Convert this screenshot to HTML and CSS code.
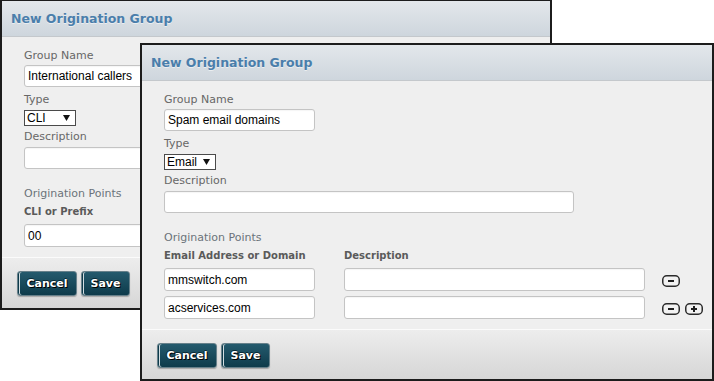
FILE: index.html
```html
<!DOCTYPE html>
<html lang="en">
<head>
<meta charset="utf-8">
<title>New Origination Group</title>
<link rel="stylesheet" href="styles.css">
</head>
<body>
<div class="desk">

  <section class="dialog dialog-back">
    <header class="dlg-head"><h1 class="dlg-title">New Origination Group</h1></header>
    <div class="dlg-body">
      <div class="lbl">Group Name</div>
      <input class="txt txt-name" type="text" value="International callers">
      <div class="lbl lbl-gap">Type</div>
      <div class="select"><span>CLI</span><svg class="arrow" width="7" height="6" viewBox="0 0 7 6"><path d="M0 0H7L3.5 6Z" fill="#111"/></svg></div>
      <div class="lbl lbl-gap2">Description</div>
      <input class="txt txt-desc" type="text" value="">
      <div class="section-title">Origination Points</div>
      <div class="points">
        <div class="prow phead">
          <span class="col1">CLI or Prefix</span>
          <span class="col2">Description</span>
        </div>
        <div class="prow">
          <input class="txt txt-row col1" type="text" value="00">
          <input class="txt txt-row col2" type="text" value="">
          <span class="icons">
            <svg class="ico" width="18" height="12" viewBox="0 0 18 12"><rect x="0.75" y="0.75" width="16.5" height="10.5" rx="4" fill="#f2f2f2" stroke="#2b2b2b" stroke-width="1.5"/><rect x="6" y="5" width="6" height="2" fill="#1e1e1e"/></svg>
          </span>
        </div>
      </div>
    </div>
    <footer class="dlg-foot">
      <button class="btn btn-cancel" type="button">Cancel</button>
      <button class="btn btn-save" type="button">Save</button>
    </footer>
  </section>

  <section class="dialog dialog-front">
    <header class="dlg-head"><h1 class="dlg-title">New Origination Group</h1></header>
    <div class="dlg-body">
      <div class="lbl">Group Name</div>
      <input class="txt txt-name" type="text" value="Spam email domains">
      <div class="lbl lbl-gap">Type</div>
      <div class="select"><span>Email</span><svg class="arrow" width="7" height="6" viewBox="0 0 7 6"><path d="M0 0H7L3.5 6Z" fill="#111"/></svg></div>
      <div class="lbl lbl-gap2">Description</div>
      <input class="txt txt-desc" type="text" value="">
      <div class="section-title">Origination Points</div>
      <div class="points">
        <div class="prow phead">
          <span class="col1">Email Address or Domain</span>
          <span class="col2">Description</span>
        </div>
        <div class="prow">
          <input class="txt txt-row col1" type="text" value="mmswitch.com">
          <input class="txt txt-row col2" type="text" value="">
          <span class="icons">
            <svg class="ico" width="18" height="12" viewBox="0 0 18 12"><rect x="0.75" y="0.75" width="16.5" height="10.5" rx="4" fill="#f2f2f2" stroke="#2b2b2b" stroke-width="1.5"/><rect x="6" y="5" width="6" height="2" fill="#1e1e1e"/></svg>
          </span>
        </div>
        <div class="prow">
          <input class="txt txt-row col1" type="text" value="acservices.com">
          <input class="txt txt-row col2" type="text" value="">
          <span class="icons">
            <svg class="ico" width="18" height="12" viewBox="0 0 18 12"><rect x="0.75" y="0.75" width="16.5" height="10.5" rx="4" fill="#f2f2f2" stroke="#2b2b2b" stroke-width="1.5"/><rect x="6" y="5" width="6" height="2" fill="#1e1e1e"/></svg>
            <svg class="ico" width="18" height="12" viewBox="0 0 18 12"><rect x="0.75" y="0.75" width="16.5" height="10.5" rx="4" fill="#f2f2f2" stroke="#2b2b2b" stroke-width="1.5"/><rect x="6" y="5" width="6" height="2" fill="#1e1e1e"/><rect x="8" y="3" width="2" height="6" fill="#1e1e1e"/></svg>
          </span>
        </div>
      </div>
    </div>
    <footer class="dlg-foot">
      <button class="btn btn-cancel" type="button">Cancel</button>
      <button class="btn btn-save" type="button">Save</button>
    </footer>
  </section>

</div>
</body>
</html>
```
FILE: styles.css
```css
* { box-sizing: border-box; }

html, body {
  margin: 0;
  padding: 0;
  background: #fff;
}

.desk {
  position: relative;
  width: 714px;
  height: 381px;
  overflow: hidden;
}

.dialog {
  position: absolute;
  display: flex;
  flex-direction: column;
  border: 2px solid #1c1c1c;
  background: #efefef;
  font-family: "DejaVu Sans", Verdana, sans-serif;
}

.dialog-back {
  left: 0;
  top: -1px;
  width: 552px;
  height: 311px;
}

.dialog-front {
  left: 140px;
  top: 43px;
  width: 574px;
  height: 338px;
}

.dlg-head {
  height: 36px;
  flex: none;
  display: flex;
  align-items: center;
  padding-left: 9px;
  background: linear-gradient(#e3e7eb, #ced6dd);
  border-bottom: 1px solid #c4c8cc;
}

.dlg-title {
  margin: 0;
  font-size: 12.5px;
  font-weight: bold;
  color: #4a7eab;
  text-shadow: 0 1px 0 rgba(255, 255, 255, 0.55);
}

.dlg-body {
  padding: 12px 22px 10px 22px;
  flex: none;
}

.lbl {
  font-size: 11px;
  line-height: 14px;
  color: #676767;
  margin-bottom: 2px;
}

.lbl-gap { margin-top: 6px; margin-bottom: 3px; }
.lbl-gap2 { margin-top: 4px; margin-bottom: 3px; }

.txt {
  display: block;
  height: 22px;
  margin: 0;
  padding: 0 3px;
  border: 1px solid #c4c4c4;
  border-radius: 3px;
  background: #fff;
  box-shadow: inset 0 1px 1px rgba(0, 0, 0, 0.04);
  font: 12px "Liberation Sans", Arial, sans-serif;
  color: #000;
  outline: none;
}

.txt-row { height: 23px; }
.txt-name { width: 151px; }
.txt-desc { width: 410px; }

.select {
  display: flex;
  align-items: center;
  justify-content: space-between;
  width: 52px;
  height: 16px;
  padding: 0 5px 0 2px;
  border: 1px solid #4a4a4a;
  background: #fff;
  font: 12px "Liberation Sans", Arial, sans-serif;
  color: #000;
}

.arrow { display: block; }

.section-title {
  margin-top: 18px;
  font-size: 11px;
  line-height: 14px;
  color: #6b737a;
}

.points {
  display: flex;
  flex-direction: column;
  gap: 5px;
  margin-top: 5px;
}

.prow {
  display: flex;
  align-items: center;
}

.phead {
  font-size: 10px;
  line-height: 12px;
  font-weight: bold;
  color: #5a5a5a;
  margin-bottom: 1px;
}

.col1 { width: 151px; flex: none; margin-right: 29px; }
.col2 { width: 301px; flex: none; margin-right: 17px; }

.icons {
  display: flex;
  gap: 5px;
  padding-top: 2px;
}

.ico { display: block; }

.dlg-foot {
  flex: 1;
  display: flex;
  align-items: flex-start;
  gap: 4px;
  padding: 13px 0 0 15px;
  border-top: 1px solid #fbfbfb;
  background: linear-gradient(#ededed, #d6d6d6);
}

.btn {
  height: 25px;
  margin: 0;
  padding: 0;
  border: 1px solid #66808a;
  border-radius: 3px;
  background: linear-gradient(#245a6d, #0e3b4b);
  box-shadow: inset 1px 0 0 #0e3b4b, inset 2px 0 0 #d3dee2, 0 1px 1px rgba(0, 0, 0, 0.25);
  font: bold 11px "DejaVu Sans", Verdana, sans-serif;
  color: #fff;
  text-shadow: 1px 1px 0 #000, -1px 0 0 #0a2a35, 0 -1px 0 #0a2a35;
}

.btn-cancel { width: 60px; }
.btn-save { width: 49px; }
```
